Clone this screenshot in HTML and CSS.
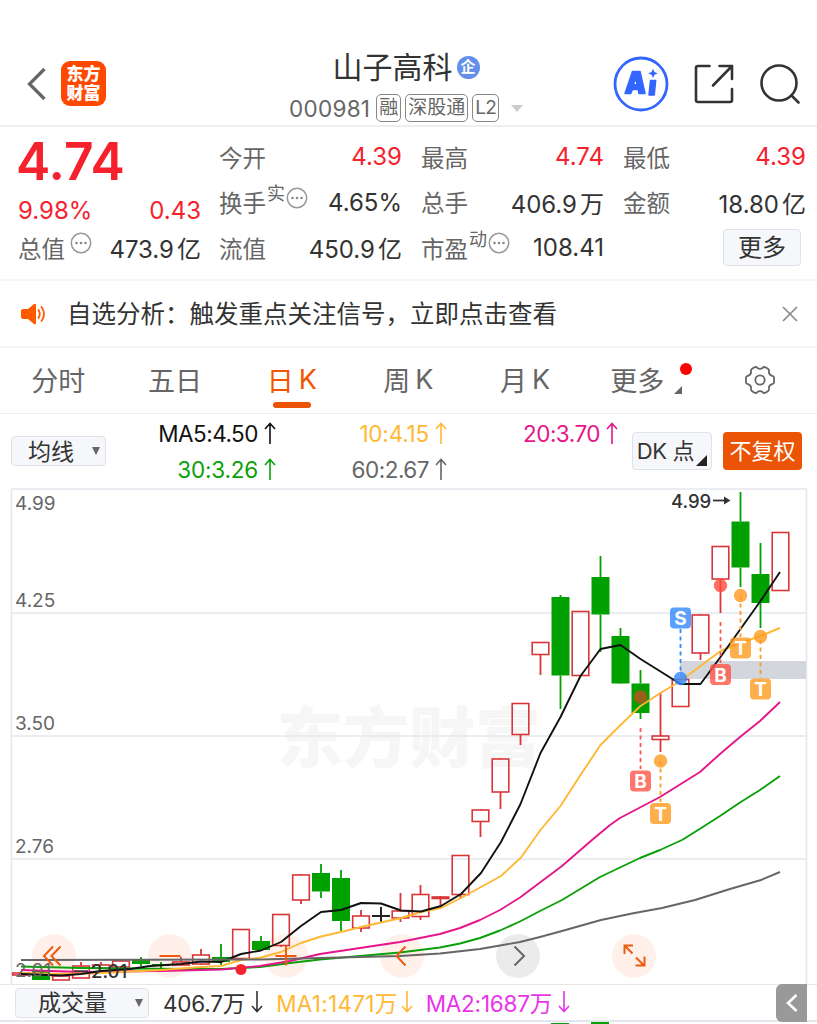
FILE: index.html
```html
<!DOCTYPE html>
<html lang="zh-CN">
<head>
  <meta charset="UTF-8">
  <title>山子高科 000981</title>
  <link rel="stylesheet" href="styles.css">
</head>
<body>

  <!-- Icons -->
  <svg class="defs" width="0" height="0">
    <symbol id="up" viewBox="0 0 12 24"><path d="M6 23V2.500M1 8l5-5.500 5 5.500"/></symbol>
    <symbol id="down" viewBox="0 0 12 24"><path d="M6 1v20.500M1 16l5 5.500 5-5.500"/></symbol>
    <symbol id="dots" viewBox="0 0 22 22">
      <circle cx="11" cy="11" r="9.700" fill="none" stroke="#999" stroke-width="1.500"/>
      <circle cx="6.500" cy="11" r="1.300" fill="#888"/><circle cx="11" cy="11" r="1.300" fill="#888"/><circle cx="15.500" cy="11" r="1.300" fill="#888"/>
    </symbol>
  </svg>

  <header class="header">
    <div class="header-left">
      <svg class="back" width="20" height="34" viewBox="0 0 20 34"><path d="M17.500 2L2.500 17l15 15" fill="none" stroke="#666" stroke-width="3.300"/></svg>
      <div class="logo">东方<br>财富</div>
    </div>
    <div class="header-title">
      <div class="stock-name">山子高科<span class="corp">企</span></div>
      <div class="stock-code">
        <span class="code">000981</span>
        <span class="tag">融</span><span class="tag">深股通</span><span class="tag tag-l2">L2</span>
        <i class="caret"></i>
      </div>
    </div>
    <div class="header-right">
      <svg width="56" height="56" viewBox="0 0 56 56">
        <circle cx="28" cy="28" r="26" fill="none" stroke="#3366ff" stroke-width="2.800"/>
        <path fill="#3366ff" fill-rule="evenodd" stroke="#3366ff" stroke-linejoin="round" stroke-width="1.500" d="M19.500 15.500h7.500l5 22h-6l-.8-4h-5.700l-1.800 4h-5.700zM22.800 22.500l-2.600 6.300h4z"/>
        <path fill="#3366ff" stroke="#3366ff" stroke-linejoin="round" stroke-width="1.500" d="M37.500 24.500h5.200l-1.500 14.500h-5.200z"/>
        <path fill="#3366ff" d="M40 12.800l1.500 3.200 3.300 1.400-3.300 1.400L40 22l-1.500-3.200-3.300-1.400 3.300-1.400z"/>
      </svg>
      <svg width="40" height="40" viewBox="0 0 40 40" fill="none" stroke="#333" stroke-width="2.600" stroke-linecap="round" stroke-linejoin="round">
        <path d="M15.500 2H4a2 2 0 0 0-2 2v32a2 2 0 0 0 2 2h32a2 2 0 0 0 2-2V25M25.500 2H38v13M38 2L19 21.500"/>
      </svg>
      <svg width="42" height="42" viewBox="0 0 42 42" fill="none" stroke="#333" stroke-width="2.600" stroke-linecap="round">
        <circle cx="20" cy="20" r="17.500"/><path d="M32.500 32.500L39.500 39.500"/>
      </svg>
    </div>
  </header>

  <section class="quote">
    <div class="price-box">
      <div class="price">4.74</div>
      <div class="line red change"><span>9.98%</span><span>0.43</span></div>
      <div class="line"><label>总值<svg class="dots gap"><use href="#dots"/></svg></label><span>473.9<b>亿</b></span></div>
    </div>
    <div class="stats">
      <div class="line"><label>今开</label><span class="red">4.39</span></div>
      <div class="line"><label>最高</label><span class="red">4.74</span></div>
      <div class="line"><label>最低</label><span class="red">4.39</span></div>
      <div class="line"><label>换手<sup>实</sup><svg class="dots"><use href="#dots"/></svg></label><span>4.65%</span></div>
      <div class="line"><label>总手</label><span>406.9<b>万</b></span></div>
      <div class="line"><label>金额</label><span>18.80<b>亿</b></span></div>
      <div class="line"><label>流值</label><span>450.9<b>亿</b></span></div>
      <div class="line"><label>市盈<sup>动</sup><svg class="dots"><use href="#dots"/></svg></label><span>108.41</span></div>
      <div class="line"><button class="more">更多</button></div>
    </div>
  </section>

  <section class="notice">
    <svg width="26" height="22" viewBox="0 0 26 22">
      <path fill="#ff5a00" d="M2 6h5l6-5q2-1 2 1v18q0 2-2 1l-6-5H2q-2 0-2-2V8q0-2 2-2z"/>
      <path fill="none" stroke="#ff5a00" stroke-width="1.800" stroke-linecap="round" d="M17.500 7q2.500 4 0 8M20.500 4q5 7 0 14"/>
    </svg>
    <p>自选分析：触发重点关注信号，立即点击查看</p>
    <svg width="16" height="16" viewBox="0 0 16 16"><path d="M1 1l14 14M15 1L1 15" stroke="#888" stroke-width="1.600"/></svg>
  </section>

  <nav class="tabs">
    <a>分时</a>
    <a>五日</a>
    <a class="active">日<span>K</span></a>
    <a>周<span>K</span></a>
    <a>月<span>K</span></a>
    <a class="tab-more">更多<i class="corner"></i><i class="dot"></i></a>
    <a class="tab-set"><svg width="32" height="30" viewBox="0 0 34 32" fill="none" stroke="#666" stroke-width="1.900" stroke-linejoin="round">
      <path d="M11 2.500Q13 1.500 14 3q3 2.400 6 0 1-1.500 3-.5l3 2q1 1 .5 2.500-.3 3.500 3.500 4.500 2 .5 2 2v5q0 1.500-2 2-3.800 1-3.500 4.500.5 1.500-.5 2.500l-3 2q-2 1-3-.5-3-2.400-6 0-1 1.500-3 .5l-3-2q-1-1-.5-2.500Q7.800 21.500 4 20.500q-2-.5-2-2v-5q0-1.500 2-2Q7.800 10.500 7.500 7 7 5.500 8 4.500z"/>
      <circle cx="17" cy="16" r="5"/>
    </svg></a>
  </nav>

  <section class="ma-bar">
    <button class="select">均线<i class="tri"></i></button>
    <div class="ma-list">
      <span class="ma5">MA5:4.50<svg class="arrow"><use href="#up"/></svg></span>
      <span class="ma10">10:4.15<svg class="arrow"><use href="#up"/></svg></span>
      <span class="ma20">20:3.70<svg class="arrow"><use href="#up"/></svg></span>
      <span class="ma30">30:3.26<svg class="arrow"><use href="#up"/></svg></span>
      <span class="ma60">60:2.67<svg class="arrow"><use href="#up"/></svg></span>
    </div>
    <button class="dk">DK 点<i class="corner"></i></button>
    <button class="adjust">不复权</button>
  </section>

  <svg class="chart" id="chart" width="817" height="496" viewBox="0 488 817 496">
    <text class="watermark" x="277" y="762" textLength="264">东方财富</text>
    <path class="grid" d="M11.500 489H806.500V984M11.500 489V984M11.500 613H806.500M11.500 736H806.500M11.500 859H806.500"/>
    <rect x="680" y="661" width="126" height="18" fill="#d3d7dd"/>
    <g id="buttons">
      <g fill="#fff1ea">
        <circle cx="54" cy="956" r="22"/><circle cx="170" cy="956" r="22"/><circle cx="286" cy="956" r="22"/>
        <circle cx="402" cy="956" r="22"/><circle cx="634" cy="956" r="22"/>
      </g>
      <circle cx="518" cy="956" r="22" fill="#ebebeb"/>
    </g>
    <g id="candles"></g>
    <g id="lines"></g>
    <g class="axis">
      <text x="15" y="509.500">4.99</text>
      <text x="15" y="606.500">4.25</text>
      <text x="15" y="730">3.50</text>
      <text x="15" y="853">2.76</text>
      <text x="15" y="976.500">2.01</text>
    </g>
    <text class="mark" x="91" y="978">2.01</text>
    <path d="M74 971H88" stroke="#333" stroke-width="1.500"/>
    <text class="mark" x="671" y="507.500">4.99</text>
    <path d="M713 500.500H728" stroke="#333" stroke-width="1.800"/>
    <path d="M724 496.500l6.500 4-6.500 4z" fill="#333"/>
    <circle cx="241" cy="969.500" r="5.500" fill="#f5222d"/>
    <g fill="none" stroke="#ef5a0c" stroke-width="2">
      <path d="M53 946.500l-9 9.500 9 9.500M60.500 946.500l-9 9.500 9 9.500"/>
      <path d="M159.500 956h21M275.500 956h21M286 945.500v20"/>
      <path d="M405.500 946.500l-9 9.500 9 9.500"/>
      <path d="M514.500 946.500l9.500 9.500-9.500 9.500" stroke="#666"/>
      <path d="M624.500 954v-8.500h8.500M624.500 945.500l8 8M644.500 956.500v9h-9M636 957.500l8 8"/>
    </g>
    <g id="signals"></g>
  </svg>

  <section class="volume-bar">
    <button class="select wide">成交量<i class="tri"></i></button>
    <span class="vol">406.7万<svg class="arrow"><use href="#down"/></svg></span>
    <span class="vol1">MA1:1471万<svg class="arrow"><use href="#down"/></svg></span>
    <span class="vol2">MA2:1687万<svg class="arrow"><use href="#down"/></svg></span>
    <div class="collapse"><svg width="12" height="18" viewBox="0 0 12 18"><path d="M10.500 1L2 9l8.500 8" fill="none" stroke="#fff" stroke-width="2.600"/></svg></div>
  </section>
  <div class="volume-chart"><i class="bar bar-low"></i><i class="bar"></i></div>

  <script src="chart.js"></script>
</body>
</html>
```
FILE: styles.css
```css
* {
  box-sizing: border-box;
}
body {
  margin: 0;
  width: 817px;
  height: 1024px;
  overflow: hidden;
  background: #fff;
  color: #333;
  font-family: Inter, "Noto Sans CJK SC", sans-serif;
  font-size: 24px;
}
button {
  font: inherit;
  color: inherit;
  padding: 0;
  border: 1px solid #dfe2e8;
  border-radius: 4px;
  background: #f5f7fa;
}
.defs {
  display: block;
}
.red {
  color: #f5222d;
}

/* Header */
.header {
  height: 127px;
  padding: 40px 16px 0 27px;
  display: grid;
  grid-template-columns: 1fr auto 1fr;
  border-bottom: 2px solid #eee;
}
.header-left, .header-right {
  display: flex;
  align-items: center;
  padding-top: 2px;
}
.header-left {
  gap: 14px;
}
.logo {
  width: 45px;
  height: 45px;
  border-radius: 9px;
  background: #ff4800;
  color: #fff;
  font-size: 17px;
  line-height: 18.5px;
  font-weight: 900;
  text-align: center;
  padding-top: 4px;
}
.header-title {
  display: flex;
  flex-direction: column;
  align-items: center;
  margin-right: 16px;
}
.stock-name {
  display: flex;
  align-items: center;
  font-size: 30px;
  line-height: 56px;
  height: 54px;
}
.corp {
  width: 23px;
  height: 23px;
  margin-left: 4px;
  border-radius: 50%;
  background: #658fe8;
  color: #fff;
  font-size: 15px;
  line-height: 22px;
  font-weight: 700;
  text-align: center;
}
.stock-code {
  display: flex;
  align-items: center;
  height: 28px;
  color: #666;
}
.code {
  font-size: 22.500px;
  letter-spacing: 0.3px;
  margin-right: 6px;
}
.tag {
  height: 28px;
  padding: 0 2px;
  margin-right: 4px;
  border: 1px solid #888;
  border-radius: 5px;
  font-size: 19px;
  line-height: 26px;
}
.tag-l2 {
  letter-spacing: -0.8px;
}
.caret {
  margin-left: 8px;
  border: 6.500px solid transparent;
  border-top: 7px solid #ccc;
  border-bottom: 0;
}
.header-right {
  justify-content: flex-end;
  gap: 25px;
}

/* Quote */
.quote {
  height: 154px;
  padding: 7px 11px 0 18px;
  display: flex;
  gap: 18px;
  border-bottom: 2px solid #f5f5f5;
}
.price-box {
  width: 183px;
}
.price {
  height: 53px;
  margin-left: -2px;
  font-size: 51.500px;
  line-height: 54px;
  font-weight: 600;
  color: #f5222d;
}
.price-box .change {
  height: 38px;
  padding-top: 8px;
}
.stats {
  display: grid;
  grid-template-columns: repeat(3, 183px);
  column-gap: 19px;
  grid-auto-rows: 45.500px;
}
.line {
  display: flex;
  justify-content: space-between;
  align-items: center;
  height: 45.500px;
  white-space: nowrap;
}
.line label {
  display: flex;
  align-items: center;
  color: #666;
  font-size: 23.500px;
}
.line sup {
  font-size: 18px;
  line-height: 18px;
  margin: -16px 1px 0;
}
.line b {
  font-weight: 400;
  margin-left: 3px;
}
.dots {
  width: 22px;
  height: 22px;
  margin-top: -9px;
}
.gap {
  margin-left: 5px;
}
.more {
  width: 78px;
  height: 37px;
  margin: 0 5px 0 auto;
  line-height: 34px;
}

/* Notice */
.notice {
  height: 67px;
  padding: 0 19px 0 21px;
  display: flex;
  align-items: center;
  border-bottom: 2px solid #f5f5f5;
}
.notice p {
  flex: 1;
  margin: 0 0 2px 20px;
  font-size: 24.500px;
}

/* Tabs */
.tabs {
  height: 66px;
  display: grid;
  grid-template-columns: repeat(7, 116.700px);
  border-bottom: 1px solid #f0f0f0;
}
.tabs a {
  position: relative;
  display: flex;
  align-items: center;
  justify-content: center;
  padding-bottom: 3px;
  color: #666;
  font-size: 27px;
}
.tabs a span {
  margin-left: 5px;
}
.tabs .active {
  color: #f25500;
}
.tabs .active::after {
  content: "";
  position: absolute;
  bottom: 5px;
  width: 38px;
  height: 6px;
  border-radius: 3px;
  background: #ea5404;
}
.tabs .tab-more {
  padding-right: 9px;
}
.tabs .tab-set {
  padding: 0 0 2px 3px;
}
.corner {
  position: absolute;
  right: 18px;
  bottom: 19px;
  border-left: 8px solid transparent;
  border-bottom: 8px solid #666;
}
.dot {
  position: absolute;
  right: 8px;
  top: 15px;
  width: 12px;
  height: 12px;
  border-radius: 50%;
  background: #f00;
}

/* Moving averages */
.ma-bar {
  height: 74px;
  padding: 0 15px 0 11px;
  display: flex;
  align-items: center;
}
.select {
  width: 95px;
  height: 30px;
  display: flex;
  align-items: center;
  justify-content: space-between;
  padding: 0 5px 3px 16px;
  font-size: 23px;
}
.tri {
  margin-top: 3px;
  border: 4.500px solid transparent;
  border-top: 8px solid #666;
  border-bottom: 0;
}
.ma-list {
  width: 512px;
  height: 72px;
  margin-right: 14px;
  display: grid;
  grid-template-columns: 170px 171px 171px;
  font-size: 22.500px;
  letter-spacing: -0.5px;
}
.ma-list span, .volume-bar span {
  display: flex;
  align-items: center;
  justify-content: flex-end;
}
.arrow {
  width: 12px;
  height: 24px;
  margin-left: 6px;
  fill: none;
  stroke: currentColor;
  stroke-width: 1.600px;
}
.ma5 { color: #111; }
.ma10 { color: #ffb833; letter-spacing: -0.2px; }
.ma20 { color: #e5158a; }
.ma30 { color: #0aa00a; letter-spacing: -0.2px; }
.ma60 { color: #666; }
.dk {
  position: relative;
  width: 80px;
  height: 38px;
  padding: 0 13px 4px 0;
  font-size: 22px;
  letter-spacing: -0.3px;
  white-space: nowrap;
}
.dk .corner {
  right: 4px;
  bottom: 3px;
  border-left-width: 11px;
  border-bottom: 11px solid #222;
}
.adjust {
  width: 79px;
  height: 38px;
  margin-left: 11px;
  padding-bottom: 4px;
  border: 0;
  background: #ea5404;
  color: #fff;
  font-size: 22px;
}

/* Chart */
.chart {
  display: block;
}
.grid {
  fill: none;
  stroke: #e4e7ee;
  stroke-width: 1.600px;
}
.watermark {
  font-size: 66px;
  font-weight: 900;
  fill: #f6f6f6;
}
.axis {
  font-size: 19px;
  fill: #666;
}
.mark {
  font-size: 18.500px;
  font-weight: 500;
  fill: #333;
}
.badge {
  font-size: 19px;
  font-weight: 700;
  fill: #fff;
  text-anchor: middle;
}

/* Volume */
.volume-bar {
  height: 38px;
  padding: 0 10px 0 15px;
  display: flex;
  align-items: center;
  border-top: 1px solid #e6e6e6;
  border-bottom: 2px solid #e4e7ee;
  font-size: 22.500px;
}
.wide {
  width: 134px;
  padding-left: 22px;
}
.volume-bar span {
  padding-bottom: 1px;
}
.vol { margin-left: 14px; letter-spacing: -0.2px; }
.vol1 { margin-left: 13px; color: #ffb833; letter-spacing: 0.3px; }
.vol2 { margin-left: 13px; color: #e933e9; letter-spacing: -0.2px; }
.vol1 .arrow {
  margin-left: 3px;
}
.collapse {
  width: 31px;
  height: 38px;
  margin-left: auto;
  display: flex;
  align-items: center;
  justify-content: center;
  border-radius: 6px 0 0 6px;
  background: #999;
}
.volume-chart {
  height: 2px;
  padding-left: 551px;
  display: flex;
  align-items: flex-end;
  gap: 22px;
}
.bar {
  width: 18px;
  height: 2px;
  background: #0aa00a;
}
.bar-low {
  height: 1px;
}
```
FILE: chart.js
```javascript
const NS = 'http://www.w3.org/2000/svg';
const RED = '#d9363a';
const GREEN = '#00a000';

function add(parent, name, attrs, text) {
  const el = document.createElementNS(NS, name);
  for (const key in attrs) el.setAttribute(key, attrs[key]);
  if (text) el.textContent = text;
  document.getElementById(parent).appendChild(el);
}

// x, high, body top, body bottom, low, type (r = up, g = down, k = flat)
const candles = [
  [21, 973, 973, 975, 976, 'r'], [41, 971, 971, 980, 980, 'g'], [61, 975, 976, 980, 980, 'r'],
  [81, 962, 966, 978, 978, 'r'], [101, 962, 965, 968, 968, 'r'], [121, 960, 961, 967, 967, 'r'],
  [141, 957, 960, 964, 966, 'g'], [161, 962, 964, 966, 970, 'g'], [181, 957, 962, 965, 965, 'r'],
  [201, 949, 955, 964, 965, 'r'], [221, 944, 957, 962, 965, 'g'], [241, 929, 929.5, 958.5, 959, 'r'],
  [261, 936, 941, 950, 950, 'g'], [281, 914, 914.5, 945.5, 947, 'r'], [301, 874, 875, 900, 904, 'r'],
  [321, 864, 873, 891.5, 898, 'g'], [341, 870, 878, 921, 931, 'g'], [361, 910, 916, 928, 932, 'r'],
  [381, 907, 916, 916, 922, 'k'], [400.5, 893, 911, 918, 922, 'r'], [420.5, 885, 894.5, 916.5, 920, 'r'],
  [440.5, 896, 897, 898.5, 905, 'r'], [460.5, 855, 855.5, 894.5, 898, 'r'], [480.5, 809, 810, 821.5, 837, 'r'],
  [500.5, 758, 759, 792, 809, 'r'], [520.5, 703, 703.5, 734.5, 745, 'r'], [540.5, 642, 642.5, 654.5, 675, 'r'],
  [560.5, 595, 597, 675.5, 709, 'g'], [580.5, 611, 611.5, 675.5, 676, 'r'], [600.5, 556, 577, 614.5, 652, 'g'],
  [620.5, 628, 636, 683.5, 683, 'g'], [640.5, 670, 683.5, 713, 719, 'g'], [660.5, 692, 736, 739.5, 752, 'r'],
  [680.5, 679, 679.5, 706.5, 707, 'r'], [700.5, 614, 615, 653, 660, 'r'], [720.5, 546, 546.5, 579, 613, 'r'],
  [740.5, 492, 521.5, 567.5, 587, 'g'], [760.5, 543, 574, 603, 628, 'g'], [780.5, 532, 532.5, 590.5, 590, 'r']
];

for (const [x, high, top, bottom, low, type] of candles) {
  const color = type === 'r' ? RED : type === 'g' ? GREEN : '#222';
  add('candles', 'path', { d: `M${x} ${high}V${top}M${x} ${bottom}V${low}`, stroke: color, 'stroke-width': 1.8 });
  if (type === 'g') {
    add('candles', 'rect', { x: x - 9, y: top, width: 18, height: bottom - top, fill: color });
  } else if (type === 'r') {
    add('candles', 'rect', { x: x - 8.3, y: top, width: 16.6, height: bottom - top, fill: 'none', stroke: color, 'stroke-width': 1.6 });
  } else {
    add('candles', 'path', { d: `M${x - 9} ${top}h18M${x} ${high}V${low}`, stroke: color, 'stroke-width': 1.8 });
  }
}

// Moving average lines
const lines = [
  ['#0aa00a', '21,966.5 81,968 181,969 221,969 241,968 260,967 290,963 320,959.5 360,956 400,952.5 440,947.5 460,943.5 480,938 500,930.5 520,921.5 540,911 562,900 600,877 640,858 660,850 682,840 698,830 720,816 740,802.5 760,790 780,776'],
  ['#e5158a', '21,970 81,972 161,971 221,969.5 260,966 290,961 320,954 360,948 400,942 440,934 460,928 480,920 500,910 520,897.5 540,882.5 562,866 592,840 610,825 620,818 660,797 680,784.5 700,772 720,754 740,737 760,721 780,702'],
  ['#ffb833', '21,973 61,974 101,973 161,970 201,967 221,966 241,960 261,957.5 281,952 301,943 321,936.5 341,932 361,927 381,922.5 401,918 421,912 441,908 461,898 481,887 501,876 521,857.5 540.5,830 560.5,806 580.5,775 600.5,745 620.5,725 640.5,706 660.5,693 680.5,681 700.5,666 720.5,651 740.5,643 760.5,636 780,628'],
  ['#111', '21,974 61,975.5 81,974 101,971 130,969 150,966 181,964 201,961.5 221,962 241,954 261,950.5 281,942 301,926 321,912 341,910 361,903 381,903.5 401,910.5 421,911.5 441,906 461,894 481,873 501,842 520.5,804 540.5,753 560.5,717 580.5,676 600.5,649 620.5,645 640.5,659 660.5,671.5 680.5,684 700.5,684 720.5,657 740.5,629 760.5,601 780,572'],
  ['#666', '21,960 260,959.5 320,958 400,956 440,953.5 480,949 520,942 540,937 562,931 601,920 632,913.5 662,908 695,900 730,889 761,880 780,872']
];
for (const [color, points] of lines) {
  add('lines', 'polyline', { points, fill: 'none', stroke: color, 'stroke-width': 1.9, 'stroke-linejoin': 'round' });
}

// letter, x, badge y, signal dot y, dash start, dash end, colour, dot colour
const signals = [
  ['B', 640.5, 781, 697, 728, 769, '#ff5546', '#c1501f'],
  ['T', 660.5, 813.5, 761, 761, 802, '#ff9a1f', '#ff9a1f'],
  ['S', 680.5, 618, 678.5, 629, 672, '#3388ff', '#3388ff'],
  ['B', 720.5, 674.5, 585.5, 622, 663, '#ff5546', '#ff4a3c'],
  ['T', 740.5, 648, 595.5, 596, 637, '#ff9a1f', '#ff9a1f'],
  ['T', 760.5, 689, 636.5, 640, 678, '#ff9a1f', '#ff9a1f']
];
for (const [letter, x, y, dotY, from, to, color, dotColor] of signals) {
  add('signals', 'path', { d: `M${x} ${from}V${to}`, stroke: color, 'stroke-width': 1.8, 'stroke-dasharray': '4 3.500' });
  add('signals', 'circle', { cx: x, cy: dotY, r: 6.7, fill: dotColor, 'fill-opacity': 0.8 });
  add('signals', 'rect', { x: x - 10.5, y: y - 10.5, width: 21, height: 21, rx: 4, fill: color, 'fill-opacity': 0.8 });
  add('signals', 'text', { x, y: y + 7, class: 'badge' }, letter);
}
```
